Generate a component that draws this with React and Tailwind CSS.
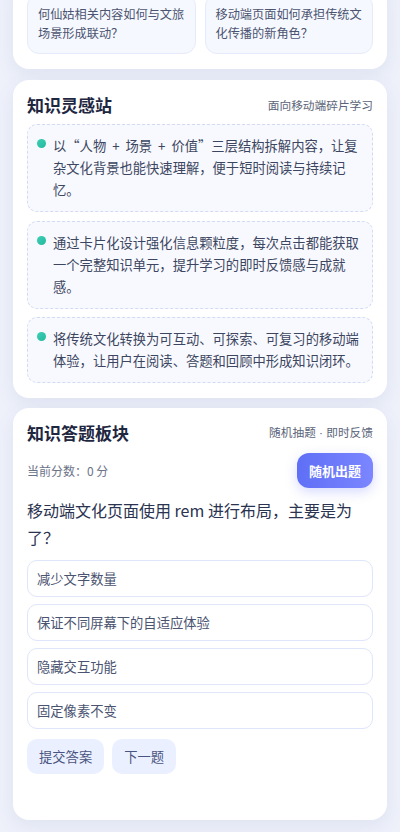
import React from 'react';

const font = { fontFamily: '"Noto Sans CJK SC", "Noto Sans", sans-serif' };
const latinFirst = { fontFamily: '"Liberation Sans", "Noto Sans CJK SC", sans-serif' };

const tips = [
  '以“人物 + 场景 + 价值”三层结构拆解内容，让复杂文化背景也能快速理解，便于短时阅读与持续记忆。',
  '通过卡片化设计强化信息颗粒度，每次点击都能获取一个完整知识单元，提升学习的即时反馈感与成就感。',
  '将传统文化转换为可互动、可探索、可复习的移动端体验，让用户在阅读、答题和回顾中形成知识闭环。',
];

const options = ['减少文字数量', '保证不同屏幕下的自适应体验', '隐藏交互功能', '固定像素不变'];

const App = () => {
  return (
    <div lang="zh-CN" className="min-h-[832px] bg-[#eef1fa] px-[13px] pb-6 overflow-hidden" style={font}>
      {/* card cut off above the viewport */}
      <div className="-mt-[22px] rounded-[16px] bg-white px-[14px] pt-4 pb-[15px] shadow-[0_6px_18px_rgba(90,105,170,0.10)]">
        <div className="grid grid-cols-2 gap-[9px]">
          <div className="rounded-[12px] border border-[#e6ebfb] bg-[#f6f8ff] px-[10px] py-[10px] text-[12.2px] leading-[19px] text-[#4b5470]">
            何仙姑相关内容如何与文旅场景形成联动？
          </div>
          <div className="rounded-[12px] border border-[#e6ebfb] bg-[#f6f8ff] px-[10px] py-[10px] text-[12.2px] leading-[19px] text-[#4b5470]">
            移动端页面如何承担传统文化传播的新角色？
          </div>
        </div>
      </div>

      <div className="mt-[11px] rounded-[16px] bg-white px-[14px] pt-[13px] pb-[15px] shadow-[0_6px_18px_rgba(90,105,170,0.10)]">
        <div className="mb-[7px] flex items-center justify-between">
          <h2 className="text-[17px] font-bold leading-[24px] text-[#1e2640]">知识灵感站</h2>
          <span className="text-[11.7px] text-[#5b6478]">面向移动端碎片学习</span>
        </div>
        <div className="flex flex-col gap-[8.5px]">
          {tips.map((t) => (
            <div key={t} className="flex items-start gap-[7px] rounded-[10px] border border-dashed border-[#d3daf4] bg-[#f8f9ff] px-[9px] py-[10px]">
              <span className="mt-[4px] h-[9px] w-[9px] shrink-0 rounded-full bg-gradient-to-br from-[#3dd0b4] to-[#22b89c]" />
              <p className="text-[13.3px] leading-[22px] text-[#3c4660] [word-spacing:3px]">{t}</p>
            </div>
          ))}
        </div>
      </div>

      <div className="mt-[10px] rounded-[16px] bg-white px-[14px] pt-[13px] pb-[46px] shadow-[0_6px_18px_rgba(90,105,170,0.10)]">
        <div className="flex items-center justify-between">
          <h2 className="text-[17px] font-bold leading-[24px] text-[#1e2640]">知识答题板块</h2>
          <span lang="en" className="text-[11.7px] text-[#5b6478]" style={latinFirst}>随机抽题 · 即时反馈</span>
        </div>
        <div className="mt-[8px] flex items-center justify-between">
          <span className="text-[12px] text-[#6b7388]">当前分数：0 分</span>
          <button className="h-[35px] rounded-[12px] bg-gradient-to-r from-[#5f6ff6] to-[#7b86ff] px-[12px] text-[13px] font-bold text-white shadow-[0_4px_12px_rgba(95,111,246,0.25)]">
            随机出题
          </button>
        </div>
        <p className="mt-[9px] text-[16px] leading-[27px] text-[#2a3350]">
          移动端文化页面使用 rem 进行布局，主要是为了？
        </p>
        <div className="mt-[9px] flex flex-col gap-[7px]">
          {options.map((o) => (
            <div key={o} className="flex h-[37px] items-center rounded-[10px] border border-[#dfe5fb] bg-white px-[9px] text-[13.3px] text-[#4a5370]">
              {o}
            </div>
          ))}
        </div>
        <div className="mt-[10px] flex gap-[8px]">
          <button className="h-[35px] rounded-[10px] bg-[#eaf0ff] px-[12px] text-[13.3px] text-[#4a5480]">提交答案</button>
          <button className="h-[35px] rounded-[10px] bg-[#eaf0ff] px-[12px] text-[13.3px] text-[#4a5480]">下一题</button>
        </div>
      </div>
    </div>
  );
};

export default App;
